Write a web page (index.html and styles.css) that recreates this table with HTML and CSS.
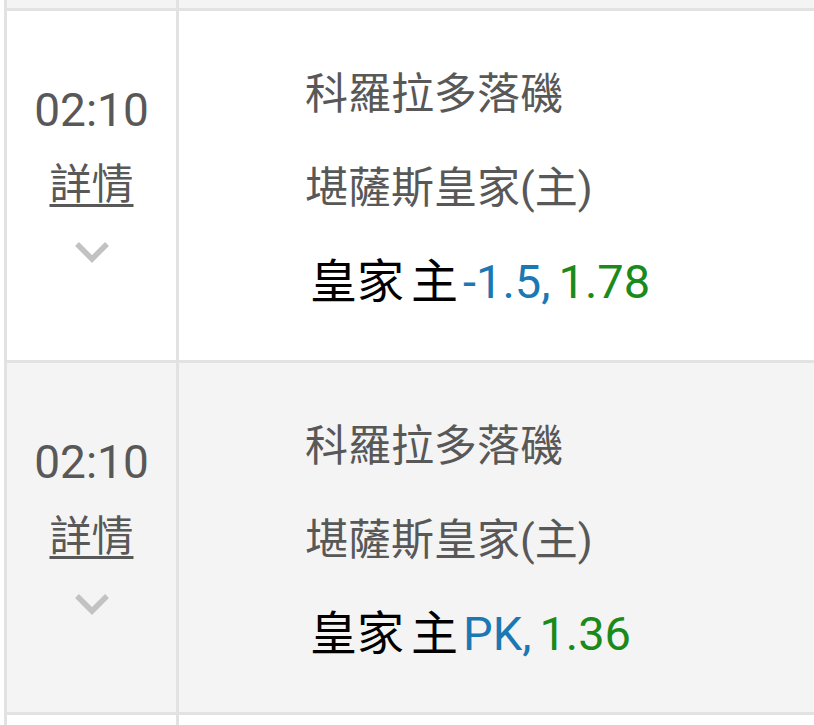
FILE: index.html
```html
<!DOCTYPE html>
<html lang="zh-Hant">
<head>
<meta charset="utf-8">
<link rel="stylesheet" href="styles.css">
</head>
<body>
<div class="table">
  <div class="row row-top">
    <div class="cell-left"></div>
    <div class="cell-right"></div>
  </div>
  <div class="row match">
    <div class="cell-left">
      <div class="time">02:10</div>
      <div class="detail"><a class="detail-link">詳情</a></div>
      <svg class="chev" viewBox="0 0 36 22" width="36" height="22"><path d="M3 3 L18 18 L33 3" fill="none" stroke="#c2c2c2" stroke-width="5.5"/></svg>
    </div>
    <div class="cell-right">
      <div class="team">科羅拉多落磯</div>
      <div class="team">堪薩斯皇家(主)</div>
      <div class="bet"><span class="pick">皇家</span><span class="pick pick-side">主</span><span class="line">-1.5,</span><span class="odds">1.78</span></div>
    </div>
  </div>
  <div class="row match alt">
    <div class="cell-left">
      <div class="time">02:10</div>
      <div class="detail"><a class="detail-link">詳情</a></div>
      <svg class="chev" viewBox="0 0 36 22" width="36" height="22"><path d="M3 3 L18 18 L33 3" fill="none" stroke="#c2c2c2" stroke-width="5.5"/></svg>
    </div>
    <div class="cell-right">
      <div class="team">科羅拉多落磯</div>
      <div class="team">堪薩斯皇家(主)</div>
      <div class="bet"><span class="pick">皇家</span><span class="pick pick-side">主</span><span class="line">PK,</span><span class="odds">1.36</span></div>
    </div>
  </div>
  <div class="row row-bottom">
    <div class="cell-left"></div>
    <div class="cell-right"></div>
  </div>
</div>
</body>
</html>
```

FILE: styles.css
```css
html, body {
  margin: 0;
  padding: 0;
  background: #ffffff;
  font-family: Roboto, "Noto Sans CJK TC", sans-serif;
  overflow: hidden;
}

.table {
  margin-left: 4px;
  border-left: 3px solid #e2e2e2;
  width: 820px;
}

.row {
  display: flex;
  border-bottom: 3px solid #e2e2e2;
}

.row-top {
  height: 8px;
  background: #f4f4f4;
}

.row-bottom {
  height: 12px;
  border-bottom: none;
}

.match {
  height: 349px;
  background: #ffffff;
}

.match.alt {
  background: #f4f4f4;
}

.cell-left {
  width: 169px;
  flex: none;
  border-right: 3px solid #e2e2e2;
  display: flex;
  flex-direction: column;
  align-items: center;
}

.cell-right {
  flex: 1;
  padding-left: 126px;
  display: flex;
  flex-direction: column;
}

.time {
  margin-top: 69px;
  font-size: 46px;
  line-height: 60px;
  color: #585858;
}

.detail {
  margin-top: 20px;
  font-size: 42px;
  line-height: 50px;
  color: #585858;
}

.detail-link {
  text-decoration: underline;
  text-decoration-thickness: 3px;
  text-underline-offset: 5px;
  color: #585858;
}

.chev {
  margin-top: 31px;
  display: block;
}

.team {
  font-size: 43px;
  line-height: 94px;
  color: #585858;
}

.team:first-child {
  margin-top: 36px;
}

.bet {
  margin-left: 5px;
  margin-top: -4px;
  font-size: 47px;
  line-height: 94px;
  color: #000000;
}

.pick {
  font-family: "Noto Sans CJK TC", sans-serif;
}

.pick-side {
  margin-left: 7px;
}

.line {
  margin-left: 5px;
  color: #1b78b2;
}

.odds {
  margin-left: 8px;
  color: #1a8a1a;
}
```
